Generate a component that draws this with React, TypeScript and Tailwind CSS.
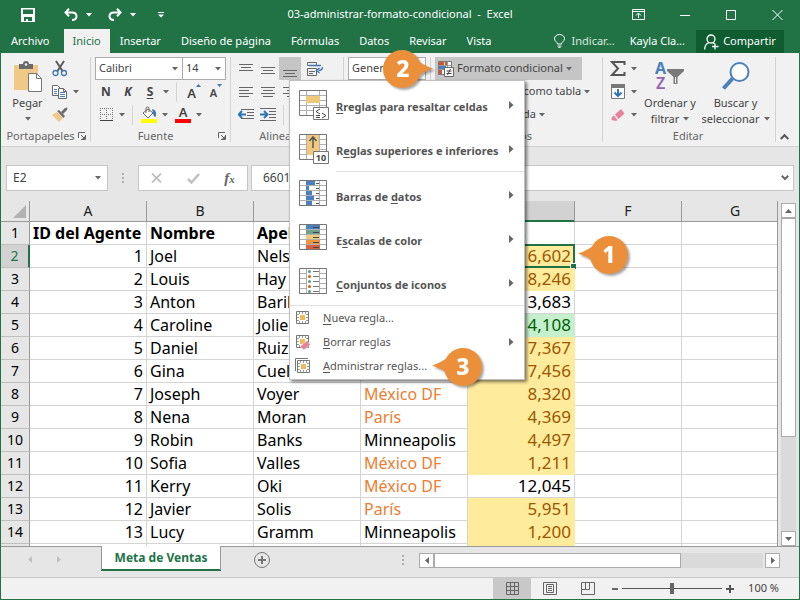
import { type ReactNode } from "react";
import clsx from "clsx";

const tabs = ["Archivo", "Inicio", "Insertar", "Diseño de página", "Fórmulas", "Datos", "Revisar", "Vista"];

const columns = ["A", "B", "C", "D", "E", "F", "G"];

type Tone = "yellow" | "green" | "none";

const rows: { id: number; name: string; last: string; city: string; sales: string; tone: Tone }[] = [
  { id: 1, name: "Joel", last: "Nelson", city: "", sales: "6,602", tone: "yellow" },
  { id: 2, name: "Louis", last: "Hay", city: "", sales: "8,246", tone: "yellow" },
  { id: 3, name: "Anton", last: "Baril", city: "", sales: "13,683", tone: "none" },
  { id: 4, name: "Caroline", last: "Jolie", city: "", sales: "14,108", tone: "green" },
  { id: 5, name: "Daniel", last: "Ruiz", city: "", sales: "7,367", tone: "yellow" },
  { id: 6, name: "Gina", last: "Cuel", city: "", sales: "7,456", tone: "yellow" },
  { id: 7, name: "Joseph", last: "Voyer", city: "México DF", sales: "8,320", tone: "yellow" },
  { id: 8, name: "Nena", last: "Moran", city: "París", sales: "4,369", tone: "yellow" },
  { id: 9, name: "Robin", last: "Banks", city: "Minneapolis", sales: "4,497", tone: "yellow" },
  { id: 10, name: "Sofia", last: "Valles", city: "México DF", sales: "1,211", tone: "yellow" },
  { id: 11, name: "Kerry", last: "Oki", city: "México DF", sales: "12,045", tone: "none" },
  { id: 12, name: "Javier", last: "Solis", city: "París", sales: "5,951", tone: "yellow" },
  { id: 13, name: "Lucy", last: "Gramm", city: "Minneapolis", sales: "1,200", tone: "yellow" },
];

const tones: Record<Tone, string> = {
  yellow: "bg-[#ffeb9c] text-[#9c5700] border-[#ffeb9c]",
  green: "bg-[#c6efce] text-[#006100] border-[#c6efce]",
  none: "border-[#d4d4d4]",
};

function Caret({ className = "text-[#666666]" }: { className?: string }) {
  return (
    <svg width="6" height="4" viewBox="0 0 6 4" className={clsx("shrink-0", className)}>
      <path d="M0 0h6L3 3.5z" fill="currentColor" />
    </svg>
  );
}

function Slot({ label, wide, active, children }: { label: string; wide?: boolean; active?: boolean; children: ReactNode }) {
  return (
    <button
      aria-label={label}
      className={clsx(
        "h-[23px] shrink-0 flex items-center justify-center",
        wide ? "w-[28px]" : "w-[22px]",
        active && "bg-[#c5c5c5]"
      )}
    >
      {children}
    </button>
  );
}

function CaretSlot({ label }: { label: string }) {
  return (
    <button aria-label={label} className="w-[10px] h-[23px] shrink-0 flex items-center justify-center">
      <Caret />
    </button>
  );
}

function Launcher({ label }: { label: string }) {
  return (
    <button aria-label={label} className="shrink-0">
      <svg width="8" height="8" viewBox="0 0 8 8" fill="none" stroke="#666666">
        <path d="M.5 6V.5H7M3 3l3 3M7.5 3v4.500H3" />
        <path d="M7 4v3H4z" fill="#666666" stroke="none" />
      </svg>
    </button>
  );
}

function Divider() {
  return <div className="w-px h-5 bg-[#d5d5d5] shrink-0" />;
}

// Horizontal strokes for the alignment buttons: [x1, x2, y]
function Lines({ data }: { data: number[][] }) {
  return (
    <svg width="16" height="16" viewBox="0 0 16 16" stroke="#666666">
      {data.map(([a, b, y], i) => (
        <path key={i} d={`M${a} ${y + 0.5}H${b}`} />
      ))}
    </svg>
  );
}

function IndentIcon({ right }: { right?: boolean }) {
  return (
    <svg width="16" height="14" viewBox="0 0 16 14" fill="none">
      <path
        d={right ? "M0 .5h16M9 3.500h7M9 6.500h7M9 9.500h7M0 12.500h16" : "M3 1.500h13M9 4.500h7M9 7.500h7M3 10.500h13"}
        stroke="#666666"
      />
      <path d={right ? "M0 6.500h7M4 3l3.500 3.500L4 10" : "M8 6.500H1M4 3L.700 6.500 4 10"} stroke="#2e75b6" strokeWidth="2" />
    </svg>
  );
}

function FormatIcon() {
  return (
    <svg width="16" height="16" viewBox="0 0 16 16" fill="none">
      <path d="M.5.5h13v13H.5z" fill="#fff" stroke="#777777" />
      <path d="M.5 4.500h13M.5 8.500h13M9.500 .5v13" stroke="#999999" />
      <path d="M1 1h5v3H1zM1 9h3v4H1zM7 1h2v3H7z" fill="#d9532c" />
      <path d="M1 5h7v3H1z" fill="#4a80bd" />
      <path d="M6.500 6.500h9v9h-9z" fill="#fff" stroke="#666666" />
      <path d="M8.500 10h5M8.500 12.500h5M12.500 8l-3 6" stroke="#444444" />
    </svg>
  );
}

function ClipboardIcon() {
  return (
    <svg width="28" height="32" viewBox="0 0 28 32" fill="none">
      <path d="M0 4h24v25H0z" fill="#f0c987" />
      <path d="M5 3h4a3 3 0 0 1 6 0h4v5H5z" fill="#6b6b6b" />
      <circle cx="12" cy="3.500" r="1.300" fill="#f1f1f1" />
      <path d="M14.500 12.500h8l5 5v13h-13z" fill="#fff" stroke="#777777" />
      <path d="M22.500 12.500v5h5" stroke="#777777" />
    </svg>
  );
}

function ScissorsIcon() {
  return (
    <svg width="16" height="17" viewBox="0 0 16 17" fill="none">
      <path d="M4 1l6.500 10M12 1L5.500 11" stroke="#5c5c5c" strokeWidth="2" />
      <circle cx="3.500" cy="13" r="2.500" stroke="#3f77b3" strokeWidth="1.300" />
      <circle cx="12" cy="13" r="2.500" stroke="#3f77b3" strokeWidth="1.300" />
    </svg>
  );
}

function CopyIcon() {
  return (
    <svg width="16" height="14" viewBox="0 0 16 14" fill="#fff" stroke="#666666">
      <path d="M.5.5h5l3 3v7h-8z" />
      <path d="M2 4.500h3M2 6.500h3M2 8.500h3" stroke="#4a80bd" />
      <path d="M6.500 3.500h5l3 3v7h-8z" />
      <path d="M11.500 3.500v3h3" fill="none" />
      <path d="M8 7.500h5M8 9.500h5M8 11.500h5" stroke="#4a80bd" />
    </svg>
  );
}

function BrushIcon() {
  return (
    <svg width="16" height="15" viewBox="0 0 16 15">
      <path d="M0 8l5-3 6 6-4 4z" fill="#f0c987" />
      <path d="M5 4l2-1 6 6-1.500 2z" fill="#6b6b6b" />
      <path d="M9 5l4-4 2.500-.500L15 3l-4 4z" fill="#6b6b6b" />
    </svg>
  );
}

function BucketIcon() {
  return (
    <svg width="16" height="17" viewBox="0 0 16 17" fill="none">
      <path d="M2 7l5-4 5 4-5 5z" fill="#fff" stroke="#666666" />
      <path d="M5 7V2.500a1.500 1.500 0 0 1 3 0V6" stroke="#666666" />
      <path d="M11 3c4 1 5 4 3.500 8-2 0-2-3-2.500-4z" fill="#3f77b3" />
      <path d="M0 13h16v4H0z" fill="#ffff00" />
    </svg>
  );
}

function BigGrid({ children }: { children?: ReactNode }) {
  return (
    <svg width="30" height="32" viewBox="0 0 30 32" fill="none" className="shrink-0">
      <path d="M.5 1.500h27v25H.5z" fill="#fff" />
      <path d="M7.500 1v25M20.500 1v25M0 6.500h28M0 11.500h28M0 16.500h28M0 21.500h28" stroke="#b0b0b0" />
      {children}
    </svg>
  );
}

// Drawn by each icon itself so that a badge can lie over the frame
function GridFrame() {
  return <path d="M.5 1.500h27v25H.5z" stroke="#767676" />;
}

function HighlightIcon() {
  return (
    <BigGrid>
      <path d="M8 7h12v9H8z" fill="#fff" />
      <path d="M7 7h14v7H7z" fill="#f0c97c" />
      <GridFrame />
      <path d="M14.500 18.500h15v12h-15z" fill="#fff" stroke="#767676" />
      <path d="M21 20l-4 2.500 4 2.500M17 26.500h4M17 28.500h4M23 24l4 2.500-4 2.500" stroke="#444444" />
    </BigGrid>
  );
}

function TopRulesIcon() {
  return (
    <BigGrid>
      <path d="M8 2h12v20H8z" fill="#f0c97c" />
      <path d="M14 15V4M10.500 8L14 4l3.500 4" stroke="#555555" strokeWidth="1.500" />
      <GridFrame />
      <path d="M14.500 18.500h15v12h-15z" fill="#fff" stroke="#767676" />
      <text x="22" y="28" textAnchor="middle" fontSize="9" fill="#444444">
        10
      </text>
    </BigGrid>
  );
}

function DataBarsIcon() {
  return (
    <BigGrid>
      <path d="M7 2h9v4H7zM7 7h3v4H7zM7 12h6v4H7zM7 17h8v4H7zM7 22h6v4H7z" fill="#4a80bd" />
      <path d="M17 4.500h3M17 9.500h3M17 14.500h3M17 19.500h3M17 24.500h3" stroke="#555555" />
      <GridFrame />
    </BigGrid>
  );
}

function ColorScaleIcon() {
  const fills = ["#4a80bd", "#6fa08f", "#f0c97c", "#ee9340", "#dc5f3f"];
  return (
    <BigGrid>
      {fills.map((fill, i) => (
        <rect key={fill} x="7" y={2 + i * 5} width="14" height="4" fill={fill} />
      ))}
      <path d="M14 4.500h6M14 9.500h6M14 14.500h6M14 19.500h6M14 24.500h6" stroke="#444444" />
      <GridFrame />
    </BigGrid>
  );
}

function IconSetIcon() {
  const fills = ["#5b9b85", "#d0660f", "#5b9b85", "#d0660f", "#5b9b85"];
  return (
    <BigGrid>
      <path d="M8 2h12v24H8z" fill="#fff" />
      {fills.map((fill, i) => (
        <circle key={i} cx="10.500" cy={4.5 + i * 5} r="1.500" fill={fill} />
      ))}
      <path d="M14 4.500h6M14 9.500h6M14 14.500h6M14 19.500h6M14 24.500h6" stroke="#777777" />
      <GridFrame />
    </BigGrid>
  );
}

function SmallGrid({ stacked, eraser }: { stacked?: boolean; eraser?: boolean }) {
  return (
    <svg width="16" height="16" viewBox="0 0 16 16" fill="none" className="shrink-0">
      {stacked && <path d="M.5 13V.5H13" stroke="#767676" />}
      <g transform={stacked ? "translate(2 2)" : "translate(1 1)"}>
        <path d="M.5.5h12v12H.5z" fill="#fff" stroke="#767676" />
        <path d="M3.500 1v2M6.500 1v2M9.500 1v2M3.500 10v2M6.500 10v2M9.500 10v2M1 3.500h2M1 6.500h2M1 9.500h2M10 3.500h2M10 6.500h2M10 9.500h2" stroke="#999999" />
        <path d="M4 4h5v5H4z" fill="#f0b95c" />
      </g>
      {eraser && <path d="M5 12.500l6.500-5.500 4 3.500L9 16z" fill="#e8829a" stroke="#fff" strokeWidth=".5" />}
    </svg>
  );
}

// "_" goes before the letter that is the access key
function KeyText({ text }: { text: string }) {
  const [before, after] = text.split("_");
  return (
    <span>
      {before}
      <span className="underline underline-offset-2">{after[0]}</span>
      {after.slice(1)}
    </span>
  );
}

function MenuArrow() {
  return (
    <svg width="5" height="8" viewBox="0 0 5 8" className="ml-auto shrink-0">
      <path d="M0 0l4.500 4L0 8z" fill="#666666" />
    </svg>
  );
}

const bigItems = [
  { text: "_Rreglas para resaltar celdas", icon: <HighlightIcon /> },
  { text: "R_eglas superiores e inferiores", icon: <TopRulesIcon /> },
  { text: "Barras de _datos", icon: <DataBarsIcon /> },
  { text: "E_scalas de color", icon: <ColorScaleIcon /> },
  { text: "_Conjuntos de iconos", icon: <IconSetIcon /> },
];

function ConditionalMenu() {
  return (
    <div
      role="menu"
      className="absolute left-[288px] top-[80px] z-10 w-[236px] bg-white border border-[#c0c0c0] pt-[2px] pb-px shadow-[2px_2px_3px_rgba(0,0,0,0.5)]"
    >
      {bigItems.map((item, i) => (
        <div key={item.text}>
          {i === 2 && <div className="ml-[46px] h-px bg-[#e1e1e1] mb-px" />}
          <button role="menuitem" className="w-full h-11 flex items-center pl-[9px] pr-[10px] text-[11px] font-bold text-[#555555]">
            {item.icon}
            <span className="ml-[7px] pt-1">
              <KeyText text={item.text} />
            </span>
            <MenuArrow />
          </button>
        </div>
      ))}
      <div className="h-px bg-[#e1e1e1]" />
      <button role="menuitem" className="w-full h-6 flex items-center pl-[5px] pr-[10px] text-[11px] text-[#555555]">
        <SmallGrid />
        <span className="ml-3"><KeyText text="_Nueva regla..." /></span>
      </button>
      <button role="menuitem" className="w-full h-6 flex items-center pl-[5px] pr-[10px] text-[11px] text-[#555555]">
        <SmallGrid eraser />
        <span className="ml-3"><KeyText text="_Borrar reglas" /></span>
        <MenuArrow />
      </button>
      <button role="menuitem" className="w-full h-6 flex items-center pl-[5px] pr-[10px] text-[11px] text-[#555555]">
        <SmallGrid stacked />
        <span className="ml-3"><KeyText text="_Administrar reglas..." /></span>
      </button>
    </div>
  );
}

function Callout({ n, right, className }: { n: number; right?: boolean; className: string }) {
  return (
    <div className={clsx("absolute z-20 w-[52px] h-10 drop-shadow-[2px_2px_1px_rgba(0,0,0,0.35)]", className)}>
      <svg width="52" height="40" viewBox="0 0 52 40">
        <g fill="#ec8f3a">
          <circle cx={right ? 20 : 32} cy="20" r="19" />
          <path d={right ? "M34 10q6 6 17 9.500q-11 3.500-17 9.500z" : "M18 9q-6 6-17 9.500q11 3.500 17 9.500z"} />
        </g>
        <text x={right ? 21 : 32} y="28" textAnchor="middle" fontSize="23" fontWeight="800" fill="#fff">
          {n}
        </text>
      </svg>
    </div>
  );
}

function TitleBar() {
  return (
    <div className="h-[29px] flex items-center text-white text-[11px] relative">
      <div className="flex items-center pl-5">
        <button aria-label="Guardar">
          <svg width="14" height="14" viewBox="0 0 14 14">
            <path d="M0 0h14v14H0z M2 1.500v4.500h10V1.500z M3 9v4h2v-2h2v2h4V9z" fill="#fff" fillRule="evenodd" />
          </svg>
        </button>
        <button aria-label="Deshacer" className="ml-[29px]">
          <svg width="14" height="13" viewBox="0 0 14 13" fill="none" stroke="#fff" strokeWidth="2">
            <path d="M5 .7L1.500 4.500 5 8.300M1.500 4.500H8c6 0 6 7.500 0 7.500" />
          </svg>
        </button>
        <Caret className="ml-2 text-white" />
        <button aria-label="Rehacer" className="ml-4">
          <svg width="14" height="13" viewBox="0 0 14 13" fill="none" stroke="#fff" strokeWidth="2">
            <path d="M9 .7l3.500 3.800L9 8.300M12.500 4.500H6C0 4.500 0 12 6 12" />
          </svg>
        </button>
        <Caret className="ml-2 text-white" />
        <button aria-label="Personalizar barra" className="ml-[22px]">
          <svg width="6" height="6" viewBox="0 0 6 6" fill="#fff">
            <path d="M0 0h6v1H0zM0 2.500h6L3 5.500z" />
          </svg>
        </button>
      </div>
      <h1 className="absolute inset-x-0 text-center pointer-events-none whitespace-pre">03-administrar-formato-condicional  -  Excel</h1>
      <div className="ml-auto flex items-center pr-4">
        <button aria-label="Opciones de cinta">
          <svg width="13" height="11" viewBox="0 0 13 11" fill="none" stroke="#fff">
            <path d="M.5.5h12v10H.5zM.5 2.500h12M6.500 9V4.500M4 6.500l2.500-2.500L9 6.500" />
          </svg>
        </button>
        <button aria-label="Minimizar" className="ml-[35px]">
          <svg width="10" height="10" viewBox="0 0 10 10"><path d="M0 5.500h10" stroke="#fff" /></svg>
        </button>
        <button aria-label="Maximizar" className="ml-9">
          <svg width="10" height="10" viewBox="0 0 10 10"><path d="M.5.5h9v9h-9z" fill="none" stroke="#fff" /></svg>
        </button>
        <button aria-label="Cerrar" className="ml-9">
          <svg width="11" height="10" viewBox="0 0 11 10"><path d="M.5 0l10 10M10.500 0L.5 10" stroke="#fff" /></svg>
        </button>
      </div>
    </div>
  );
}

function TabBar() {
  return (
    <div className="h-6 flex items-stretch text-white text-[11px] whitespace-nowrap">
      {tabs.map((tab) => (
        <button
          key={tab}
          className={clsx(
            "flex items-center",
            tab === "Inicio" ? "bg-[#f1f1f1] text-[#217346] ml-1 px-[9px]" : "px-[10px]"
          )}
        >
          {tab}
        </button>
      ))}
      <div className="ml-auto flex items-stretch pr-[15px]">
        <button className="flex items-center gap-[7px]">
          <svg width="11" height="14" viewBox="0 0 11 14" fill="none" stroke="#fff">
            <path d="M3.500 10c0-2-3-2.500-3-5.500a5 4 0 0 1 10 0c0 3-3 3.500-3 5.500zM3.500 12h4M4.500 13.500h2" />
          </svg>
          <span className="text-[#d9e8df]">Indicar...</span>
        </button>
        <button className="ml-[15px] flex items-center">Kayla Cla...</button>
        <button className="ml-[11px] w-[88px] bg-[#0e5c2f] mt-px flex items-center justify-center gap-1">
          <svg width="15" height="16" viewBox="0 0 15 16" fill="none" stroke="#fff" strokeWidth="1.300">
            <circle cx="7" cy="5" r="4" />
            <path d="M.7 15.500c0-4 1.500-6 4.500-7M8.500 8.700l2 1M11 9.500v6M8 12.500h6.500" />
          </svg>
          <span>Compartir</span>
        </button>
      </div>
    </div>
  );
}

function Group({ label, launcher, className, children }: { label: string; launcher?: boolean; className: string; children: ReactNode }) {
  return (
    <section className={clsx("shrink-0 flex flex-col pt-1", className)}>
      <div className="h-[70px]">{children}</div>
      <div className="h-[22px] flex items-center pl-[2px] pr-1 text-[#666666]">
        <span className="flex-1 text-center whitespace-nowrap">{label}</span>
        {launcher && <Launcher label={`Opciones de ${label}`} />}
      </div>
    </section>
  );
}

function GroupLine() {
  return <div className="w-px shrink-0 bg-[#d2d2d2] my-1" />;
}

function Ribbon() {
  return (
    <div className="h-[94px] flex bg-[#f1f1f1] border-b border-[#d0d0d0] text-[11px] text-[#444444] overflow-hidden">
      <Group label="Portapapeles" launcher className="w-[89px]">
        <div className="flex">
          <button className="w-12 pl-[5px] flex flex-col items-center pt-1">
            <ClipboardIcon />
            <span className="leading-5">Pegar</span>
            <span className="h-2 flex items-end"><Caret /></span>
          </button>
          <div>
            <Slot label="Cortar"><ScissorsIcon /></Slot>
            <div className="flex">
              <Slot label="Copiar"><CopyIcon /></Slot>
              <CaretSlot label="Más opciones de copiar" />
            </div>
            <Slot label="Copiar formato"><BrushIcon /></Slot>
          </div>
        </div>
      </Group>
      <GroupLine />
      <Group label="Fuente" launcher className="w-[139px]">
        <div className="pl-1">
          <div className="flex h-[23px]">
            <button className="w-[88px] border border-[#ababab] bg-white flex items-center justify-between pl-[3px] pr-1">Calibri <Caret /></button>
            <button className="w-[43px] border border-l-0 border-[#ababab] bg-white flex items-center justify-between pl-[3px] pr-1">14 <Caret /></button>
          </div>
          <div className="flex items-center">
            <Slot label="Negrita"><span className="text-[12px] font-bold">N</span></Slot>
            <Slot label="Cursiva"><span className="text-[12px] font-bold italic">K</span></Slot>
            <Slot label="Subrayado"><span className="text-[12px] font-bold underline underline-offset-2">S</span></Slot>
            <CaretSlot label="Más subrayados" />
            <div className="ml-[5px] mr-[6px]"><Divider /></div>
            <Slot label="Aumentar fuente">
              <span className="text-[13px] font-semibold pt-1">A</span>
              <svg width="5" height="3" viewBox="0 0 5 3" className="mb-3"><path d="M0 3l2.500-3L5 3z" fill="#3f77b3" /></svg>
            </Slot>
            <Slot label="Disminuir fuente">
              <span className="text-[11px] font-semibold pt-1">A</span>
              <svg width="5" height="3" viewBox="0 0 5 3" className="mb-3"><path d="M0 0h5L2.500 3z" fill="#3f77b3" /></svg>
            </Slot>
          </div>
          <div className="flex items-center">
            <Slot label="Bordes">
              <svg width="13" height="13" viewBox="0 0 13 13" fill="none" stroke="#777777">
                <path d="M0 .5h13M0 6.500h13M.5 0v13M6.500 0v13M12.500 0v13" strokeDasharray="1 1" />
                <path d="M0 12.500h13" stroke="#444444" />
              </svg>
            </Slot>
            <CaretSlot label="Más bordes" />
            <div className="mx-[5px]"><Divider /></div>
            <Slot label="Color de relleno"><BucketIcon /></Slot>
            <CaretSlot label="Más rellenos" />
            <div className="ml-[2px] flex">
              <Slot label="Color de fuente">
                <span className="w-4 h-[17px] border-b-4 border-[#ff0000] flex items-center justify-center text-[13px] leading-none font-semibold">A</span>
              </Slot>
              <CaretSlot label="Más colores" />
            </div>
          </div>
        </div>
      </Group>
      <GroupLine />
      <Group label="Alineación" className="w-[112px]">
        <div className="pl-1">
          <div className="flex">
            <Slot label="Alinear arriba"><Lines data={[[1, 15, 3], [3, 13, 6], [1, 15, 9]]} /></Slot>
            <Slot label="Alinear en medio"><Lines data={[[1, 15, 6], [3, 13, 9], [1, 15, 12]]} /></Slot>
            <Slot label="Alinear abajo" active><Lines data={[[1, 15, 9], [3, 13, 12], [1, 15, 15]]} /></Slot>
            <Slot label="Ajustar texto" wide>
              <svg width="16" height="16" viewBox="0 0 16 16" fill="none" stroke="#666666">
                <path d="M.5 1.500h9v3h-9zM.5 7.500h9v7h-9zM2 10.500h6M2 12.500h4" />
                <path d="M2 4.500h12M15.500 6c0 2.500-1 3.500-4 3.500M12.500 7l-3 2.500 3 2.500" stroke="#3f77b3" strokeWidth="1.400" />
              </svg>
            </Slot>
          </div>
          <div className="flex">
            <Slot label="Alinear a la izquierda"><Lines data={[[1, 15, 3], [1, 11, 6], [1, 15, 9], [1, 11, 12]]} /></Slot>
            <Slot label="Centrar"><Lines data={[[1, 15, 3], [3, 13, 6], [1, 15, 9], [3, 13, 12]]} /></Slot>
            <Slot label="Alinear a la derecha"><Lines data={[[1, 15, 3], [5, 15, 6], [1, 15, 9], [5, 15, 12]]} /></Slot>
          </div>
          <div className="flex items-center">
            <Slot label="Disminuir sangría"><IndentIcon /></Slot>
            <Slot label="Aumentar sangría"><IndentIcon right /></Slot>
            <div className="ml-1"><Divider /></div>
          </div>
        </div>
      </Group>
      <GroupLine />
      <Group label="Número" className="w-[86px]">
        <div className="px-1 h-[23px]">
          <button className="w-full h-full border border-[#ababab] bg-white flex items-center justify-between pl-[3px] pr-1">General <Caret /></button>
        </div>
      </Group>
      <GroupLine />
      <Group label="Estilos" className="w-[171px]">
        <div className="pl-1 whitespace-nowrap">
          <button className="h-[23px] w-[147px] bg-[#c5c5c5] flex items-center gap-[3px] px-[3px]">
            <FormatIcon />
            <span>Formato condicional</span>
            <Caret />
          </button>
          <button className="h-[23px] flex items-center gap-[3px] px-[3px]">
            <FormatIcon />
            <span>Dar formato como tabla</span>
            <Caret />
          </button>
          <button className="h-[23px] flex items-center gap-[3px] px-[3px]">
            <FormatIcon />
            <span>Estilos de celda</span>
            <Caret />
          </button>
        </div>
      </Group>
      <GroupLine />
      <Group label="Editar" className="w-[172px]">
        <div className="flex">
          <div className="pl-1 w-[37px] shrink-0">
            <div className="flex">
              <Slot label="Suma">
                <svg width="16" height="15" viewBox="0 0 16 15" fill="none" stroke="#555555" strokeWidth="2">
                  <path d="M14.500 4V1H2l6 6.500L2 14h12.500v-3" />
                </svg>
              </Slot>
              <CaretSlot label="Más funciones" />
            </div>
            <div className="flex">
              <Slot label="Rellenar">
                <svg width="14" height="15" viewBox="0 0 14 15" fill="none">
                  <path d="M.5.5h13v14H.5z" fill="#fff" stroke="#777777" />
                  <path d="M0 0h14v4H0z" fill="#777777" />
                  <path d="M7 5v7M3.500 8.500L7 12l3.500-3.500" stroke="#2e75b6" strokeWidth="2" />
                </svg>
              </Slot>
              <CaretSlot label="Más rellenar" />
            </div>
            <div className="flex">
              <Slot label="Borrar">
                <svg width="14" height="14" viewBox="0 0 14 14">
                  <path d="M4 6.500L10 1l3.500 4.500L7.500 11z" fill="#e8829a" />
                  <path d="M3 7.500L6.500 12 5 13 .5 12 1 9z" fill="#e8829a" />
                </svg>
              </Slot>
              <CaretSlot label="Más borrar" />
            </div>
          </div>
          <button className="w-[60px] shrink-0 whitespace-nowrap flex flex-col items-center pt-1">
            <svg width="30" height="30" viewBox="0 0 30 30" className="overflow-visible">
              <text x="0" y="13" fontSize="16" fontWeight="700" fill="#4a80bd">A</text>
              <text x="1" y="28" fontSize="16" fontWeight="600" fill="#9363b5">Z</text>
              <path d="M12 8h17v2l-6.500 6v7h-4v-7L12 10z" fill="#7a7a7a" />
              <path d="M20 16h1v6h-1z" fill="#fff" />
            </svg>
            <span className="mt-1 leading-4">Ordenar y</span>
            <span className="leading-4 flex items-center gap-1">filtrar <Caret /></span>
          </button>
          <button className="w-[71px] shrink-0 whitespace-nowrap flex flex-col items-center pt-1">
            <svg width="28" height="30" viewBox="0 0 28 30" fill="none">
              <path d="M1.500 27.500l9-10" stroke="#4a80bd" strokeWidth="4" />
              <circle cx="17.500" cy="11" r="9" fill="#fff" stroke="#4a80bd" strokeWidth="2" />
            </svg>
            <span className="mt-1 leading-4">Buscar y</span>
            <span className="leading-4 flex items-center gap-1">seleccionar <Caret /></span>
          </button>
        </div>
      </Group>
      <GroupLine />
      <div className="ml-auto flex items-end pr-[10px]">
        <button aria-label="Contraer cinta">
          <svg width="9" height="14" viewBox="0 0 9 14" fill="none"><path d="M.7 7L4.500 3.200 8.300 7" stroke="#555555" strokeWidth="2" /></svg>
        </button>
      </div>
    </div>
  );
}

function FormulaBar() {
  return (
    <div className="pt-[18px] pb-[10px] px-[5px] flex items-stretch text-[12px] text-[#444444]">
      <div className="w-[102px] h-[26px] shrink-0 bg-white border border-[#c6c6c6] flex items-center pr-[6px]">
        <input aria-label="Cuadro de nombres" defaultValue="E2" className="min-w-0 flex-1 pl-[6px] outline-none" />
        <Caret />
      </div>
      <div className="w-[30px] shrink-0 flex flex-col items-center justify-center gap-[2px]">
        <i className="size-[2px] bg-[#b0b0b0]" />
        <i className="size-[2px] bg-[#b0b0b0]" />
        <i className="size-[2px] bg-[#b0b0b0]" />
      </div>
      <div className="w-[110px] shrink-0 bg-white border border-[#c6c6c6] flex items-center justify-around">
        <button aria-label="Cancelar">
          <svg width="11" height="10" viewBox="0 0 11 10"><path d="M1 .5l9 9M10 .5l-9 9" stroke="#c0c0c0" strokeWidth="1.800" /></svg>
        </button>
        <button aria-label="Introducir">
          <svg width="13" height="11" viewBox="0 0 13 11" fill="none"><path d="M1 6l3.500 3.500L12 1" stroke="#c0c0c0" strokeWidth="2.500" /></svg>
        </button>
        <button aria-label="Insertar función" className="font-['Liberation_Serif',serif] italic text-[15px] leading-none font-semibold text-[#666666]">
          f<span className="text-[11px]">x</span>
        </button>
      </div>
      <div className="ml-[3px] flex-1 min-w-0 bg-white border border-[#c6c6c6] flex items-center pr-1">
        <input aria-label="Barra de fórmulas" defaultValue="6601.52" className="min-w-0 flex-1 pl-[11px] outline-none" />
        <svg width="8" height="6" viewBox="0 0 8 6" fill="none"><path d="M.8.800L4 4l3.200-3.200" stroke="#666666" strokeWidth="2" /></svg>
      </div>
    </div>
  );
}

const cell = "border-r border-b px-[3px] py-0 whitespace-nowrap overflow-hidden";

function Sheet() {
  return (
    <div className="flex-1 min-h-0 flex">
      <div className="flex-1 min-w-0 overflow-hidden border-r border-[#999999]">
        <table className="w-[788px] min-w-full table-fixed border-separate border-spacing-0 bg-white text-[16px] leading-[22px] text-black">
          <colgroup>
            <col className="w-[29px]" />
            <col className="w-[117px]" />
            <col className="w-[107px]" />
            <col className="w-[107px]" />
            <col className="w-[107px]" />
            <col className="w-[107px]" />
            <col className="w-[107px]" />
            <col />
          </colgroup>
          <thead>
            <tr className="h-[21px] bg-[#e6e6e6] text-[14px] leading-5 text-[#222222]">
              <td className="p-0 border-r border-b border-[#999999]">
                <div className="flex justify-end pr-[3px]">
                  <svg width="13" height="13" viewBox="0 0 13 13"><path d="M13 0v13H0z" fill="#b1b1b1" /></svg>
                </div>
              </td>
              {columns.map((c) => (
                <th
                  key={c}
                  scope="col"
                  className={clsx(
                    "p-0 font-normal border-r border-b",
                    c === "E" ? "bg-[#d2d2d2] text-[#217346] border-r-[#999999] border-b-[#217346] shadow-[inset_0_-1px_0_#217346]" : "border-[#999999]"
                  )}
                >
                  {c}
                </th>
              ))}
            </tr>
          </thead>
          <tbody>
            <tr className="h-[23px] font-bold">
              <th scope="row" className="p-0 font-normal text-[14px] bg-[#e6e6e6] border-r border-b border-r-[#999999] border-b-[#c0c0c0]">1</th>
              {["ID del Agente", "Nombre", "Apellido", "", "Ventas", "", ""].map((t, i) => (
                <td key={i} className={clsx(cell, "border-[#d4d4d4]")}>{t}</td>
              ))}
            </tr>
            {rows.map((r) => (
              <tr key={r.id} className="h-[23px]">
                <th
                  scope="row"
                  className={clsx(
                    "p-0 font-normal text-[14px] border-b border-b-[#c0c0c0]",
                    r.id === 1 ? "bg-[#d2d2d2] text-[#217346] border-r-2 border-r-[#217346]" : "bg-[#e6e6e6] border-r border-r-[#999999]"
                  )}
                >
                  {r.id + 1}
                </th>
                <td className={clsx(cell, "border-[#d4d4d4] text-right")}>{r.id}</td>
                <td className={clsx(cell, "border-[#d4d4d4]")}>{r.name}</td>
                <td className={clsx(cell, "border-[#d4d4d4]")}>{r.last}</td>
                <td className={clsx(cell, "border-[#d4d4d4]", r.city !== "Minneapolis" && "text-[#ed7d31]")}>{r.city}</td>
                <td className={clsx("border-r border-b px-[3px] py-0 text-right text-[17px] whitespace-nowrap relative", tones[r.tone])}>
                  {r.sales}
                  {r.id === 1 && (
                    <span className="absolute -inset-px border-2 border-[#217346]">
                      <span className="absolute -right-[3px] -bottom-[3px] size-[6px] bg-[#217346] border-t border-l border-white" />
                    </span>
                  )}
                </td>
                <td className={clsx(cell, "border-[#d4d4d4]")} />
                <td className={clsx(cell, "border-[#d4d4d4]")} />
              </tr>
            ))}
            <tr className="h-[23px]">
              <th scope="row" className="bg-[#e6e6e6] border-r border-[#999999]" />
              {columns.map((c) => (
                <td key={c} className={clsx("border-r", c === "E" ? tones.yellow : "border-[#d4d4d4]")} />
              ))}
            </tr>
          </tbody>
        </table>
      </div>
      <div className="w-[21px] shrink-0 flex flex-col items-center pt-[2px]">
        <button aria-label="Subir" className="w-[15px] h-[15px] bg-white border border-[#ababab] flex items-center justify-center">
          <svg width="7" height="4" viewBox="0 0 7 4"><path d="M0 4l3.500-4L7 4z" fill="#666666" /></svg>
        </button>
        <div className="w-[15px] flex-1 bg-[#dadada]">
          <div className="w-full h-[70%] bg-white border border-[#ababab]" />
        </div>
        <button aria-label="Bajar" className="w-[15px] h-[15px] bg-white border border-[#ababab] flex items-center justify-center">
          <svg width="7" height="4" viewBox="0 0 7 4"><path d="M0 0h7L3.500 4z" fill="#666666" /></svg>
        </button>
      </div>
    </div>
  );
}

function SheetTabs() {
  return (
    <div className="h-[32px] shrink-0 flex items-start border-b border-[#c6c6c6]">
      <div className="w-[100px] h-[26px] border-t border-[#999999] flex items-center gap-[25px] pl-[27px]">
        <button aria-label="Hoja anterior"><svg width="4" height="7" viewBox="0 0 4 7"><path d="M4 0v7L0 3.500z" fill="#c0c0c0" /></svg></button>
        <button aria-label="Hoja siguiente"><svg width="4" height="7" viewBox="0 0 4 7"><path d="M0 0v7l4-3.500z" fill="#c0c0c0" /></svg></button>
      </div>
      <button className="w-[120px] h-[25px] bg-white border-x border-x-[#999999] border-b-2 border-b-[#217346] text-[#217346] text-[12px] font-bold flex items-center justify-center">
        Meta de Ventas
      </button>
      <div className="flex-1 border-t border-[#999999] flex items-center h-[27px]">
        <button aria-label="Hoja nueva" className="ml-[33px]">
          <svg width="16" height="16" viewBox="0 0 16 16" fill="none" stroke="#777777">
            <circle cx="8" cy="8" r="7.500" />
            <path d="M8 4v8M4 8h8" strokeWidth="2" />
          </svg>
        </button>
        <div className="ml-auto flex items-center w-[378px]">
          <div className="flex flex-col gap-[2px] mr-[15px]">
            <i className="size-[2px] bg-[#b0b0b0]" />
            <i className="size-[2px] bg-[#b0b0b0]" />
            <i className="size-[2px] bg-[#b0b0b0]" />
          </div>
          <button aria-label="Izquierda" className="w-[15px] h-[15px] bg-white border border-[#ababab] flex items-center justify-center">
            <svg width="4" height="7" viewBox="0 0 4 7"><path d="M4 0v7L0 3.500z" fill="#666666" /></svg>
          </button>
          <div className="flex-1 h-[15px] bg-[#dadada] mr-[2px]">
            <div className="w-[75%] h-full bg-white border border-[#ababab]" />
          </div>
          <button aria-label="Derecha" className="w-[15px] h-[15px] bg-white border border-[#ababab] flex items-center justify-center">
            <svg width="4" height="7" viewBox="0 0 4 7"><path d="M0 0v7l4-3.500z" fill="#666666" /></svg>
          </button>
        </div>
        <div className="w-[19px]" />
      </div>
    </div>
  );
}

function StatusBar() {
  return (
    <div className="h-[21px] shrink-0 bg-[#f1f1f1] flex items-center justify-end text-[11px] text-[#444444] pr-5">
      <button aria-label="Normal" className="w-[38px] h-full bg-[#c8c8c8] flex items-center justify-center">
        <svg width="13" height="13" viewBox="0 0 13 13" fill="none" stroke="#666666"><path d="M.5.5h12v12H.5zM4.500 0v13M8.500 0v13M0 4.500h13M0 8.500h13" /></svg>
      </button>
      <button aria-label="Diseño de página" className="w-[38px] h-full flex items-center justify-center">
        <svg width="14" height="13" viewBox="0 0 14 13" fill="none" stroke="#666666"><path d="M.5.5h13v12H.5zM3.500 2.500h7v8h-7zM5 4.500h4M5 6.500h4M5 8.500h4" /></svg>
      </button>
      <button aria-label="Saltos de página" className="w-[38px] h-full flex items-center justify-center">
        <svg width="14" height="13" viewBox="0 0 14 13" fill="none" stroke="#666666"><path d="M.5.5h13v12H.5zM4.500 .5v7M8.500 .5v7M.5 7.500h8" /></svg>
      </button>
      <button aria-label="Alejar" className="ml-[5px] w-[6px] h-[2px] bg-[#666666]" />
      <input
        type="range"
        aria-label="Zoom"
        defaultValue="50"
        className="ml-1 w-[100px] h-[11px] appearance-none bg-[linear-gradient(#555,#555)] bg-[length:100%_1px] bg-center bg-no-repeat [&::-webkit-slider-thumb]:appearance-none [&::-webkit-slider-thumb]:w-1 [&::-webkit-slider-thumb]:h-[11px] [&::-webkit-slider-thumb]:bg-[#666666]"
      />
      <button aria-label="Acercar" className="ml-1">
        <svg width="8" height="8" viewBox="0 0 8 8" stroke="#555555" strokeWidth="2"><path d="M0 4h8M4 0v8" /></svg>
      </button>
      <span className="ml-[14px]">100 %</span>
    </div>
  );
}

export default function App() {
  return (
    <div className="relative h-screen flex flex-col bg-[#e6e6e6] font-['Noto_Sans',sans-serif] border-x border-b border-[#217346] overflow-hidden">
      <div className="bg-[#217346] shrink-0">
        <TitleBar />
        <TabBar />
      </div>
      <Ribbon />
      <FormulaBar />
      <Sheet />
      <SheetTabs />
      <StatusBar />
      <ConditionalMenu />
      <Callout n={1} className="left-[576px] top-[235px]" />
      <Callout n={2} right className="left-[381px] top-[49px]" />
      <Callout n={3} className="left-[430px] top-[347px]" />
    </div>
  );
}
